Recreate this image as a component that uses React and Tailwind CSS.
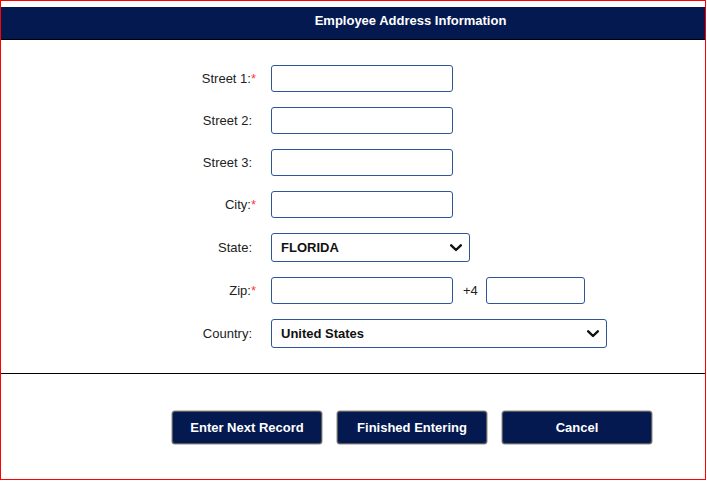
import React from "react";

function Chevron() {
  return (
    <svg width="12" height="8" viewBox="0 0 12 8" className="shrink-0">
      <path d="M1.2 1.3 L6 6 L10.8 1.3" fill="none" stroke="#111" strokeWidth="2.4" strokeLinecap="round" strokeLinejoin="round" />
    </svg>
  );
}

function Label({ text, req }) {
  return (
    <div className={"text-right text-[13px] text-[#222] leading-[16px] " + (req ? "" : "pr-[4px]")}>
      {text}
      {req && <span className="text-[#ff3b3b]">*</span>}
    </div>
  );
}

function Input({ w }) {
  return (
    <div
      className="h-[27px] border border-[#2f5596] rounded-[3px] bg-white"
      style={{ width: w }}
    />
  );
}

function Select({ w, value }) {
  return (
    <div
      className="h-[29px] border border-[#2f5596] rounded-[3px] bg-white flex items-center justify-between pl-[9px] pr-[7px]"
      style={{ width: w }}
    >
      <span className="text-[13px] font-bold text-[#111] leading-[16px]">{value}</span>
      <Chevron />
    </div>
  );
}

function Button({ children }) {
  return (
    <button className="w-[150px] h-[33px] bg-[#03194f] border border-[#5c5c5c] rounded-[3px] text-white font-bold text-[13px] leading-[16px] shadow-[0_0_0_0.5px_#888]">
      {children}
    </button>
  );
}

export default function App() {
  return (
    <div className="w-[706px] h-[480px] border border-[#ff0000] bg-white font-['Liberation_Sans',Arial,sans-serif]">
      <div className="pt-[6px]">
        <div className="h-[33px] bg-[#03194f] border-b border-black pl-[115px] pt-[6px] text-center text-white font-bold text-[13px] leading-[16px]">
          Employee Address Information
        </div>
      </div>

      <div className="pt-[25px] grid grid-cols-[255px_auto] gap-x-[15px] gap-y-[15px] items-center">
        <Label text="Street 1:" req />
        <Input w={182} />
        <Label text="Street 2:" />
        <Input w={182} />
        <Label text="Street 3:" />
        <Input w={182} />
        <Label text="City:" req />
        <Input w={182} />
        <Label text="State:" />
        <Select w={199} value="FLORIDA" />
        <Label text="Zip:" req />
        <div className="flex items-center">
          <Input w={182} />
          <span className="ml-[10px] mr-[8px] text-[13px] text-[#222] leading-[16px]">+4</span>
          <Input w={99} />
        </div>
        <Label text="Country:" />
        <Select w={336} value="United States" />
      </div>

      <div className="mt-[25px] border-t border-black" />

      <div className="pt-[37px] pl-[171px] flex gap-[15px]">
        <Button>Enter Next Record</Button>
        <Button>Finished Entering</Button>
        <Button>Cancel</Button>
      </div>
    </div>
  );
}
